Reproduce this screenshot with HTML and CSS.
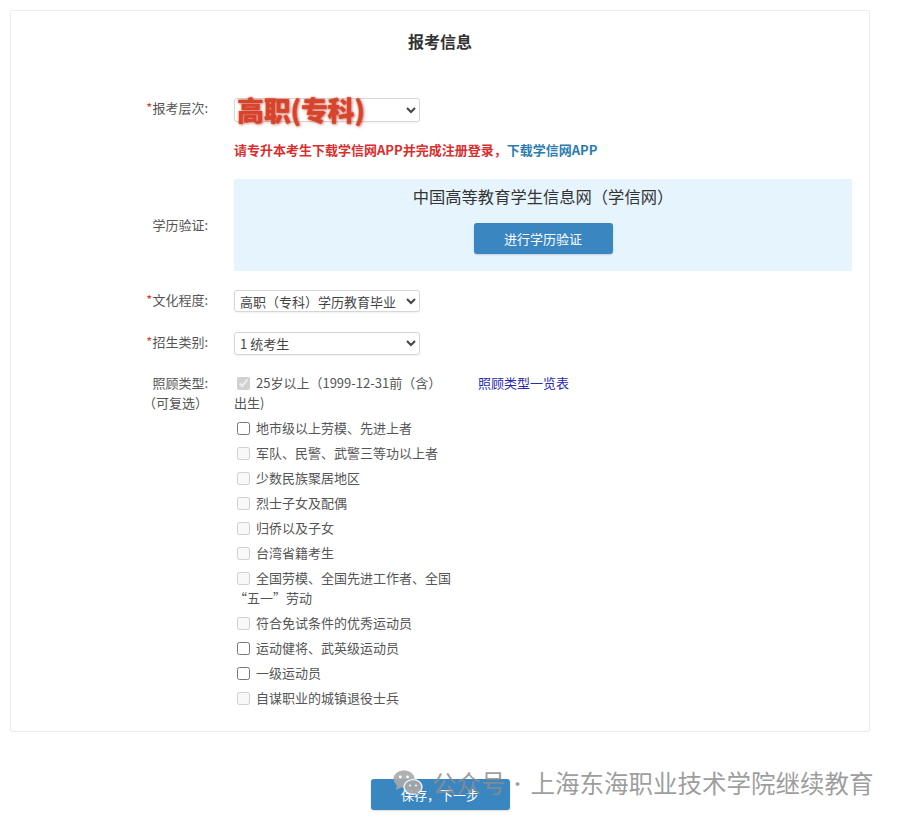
FILE: index.html
```html
<!DOCTYPE html>
<html>
	<head>
		<meta charset="UTF-8">
		<title>报考信息</title>
		<link rel="stylesheet" href="styles.css">
	</head>
	<body>
		<div class="page">
			<div class="card">
				<h2 class="title">报考信息</h2>

				<div class="row row-level">
					<label class="lab"><i>*</i>报考层次:</label>
					<div class="field">
						<div class="sel-wrap">
							<select class="sel"><option></option></select>
							<span class="mark">高职(专科)</span>
						</div>
						<p class="notice">请专升本考生下载学信网APP并完成注册登录，<a href="javascript:;">下载学信网APP</a></p>
					</div>
				</div>

				<div class="row row-verify">
					<label class="lab">学历验证:</label>
					<div class="field">
						<div class="chsi">
							<div class="chsi-title">中国高等教育学生信息网（学信网）</div>
							<a href="javascript:;" class="btn btn-verify">进行学历验证</a>
						</div>
					</div>
				</div>

				<div class="row row-edu">
					<label class="lab"><i>*</i>文化程度:</label>
					<div class="field">
						<select class="sel sel-edu"><option>高职（专科）学历教育毕业</option></select>
					</div>
				</div>

				<div class="row row-type">
					<label class="lab"><i>*</i>招生类别:</label>
					<div class="field">
						<select class="sel sel-type"><option>1 统考生</option></select>
					</div>
				</div>

				<div class="row row-care">
					<label class="lab">照顾类型:<br>（可复选）</label>
					<div class="field care">
						<div class="checks">
							<div class="item"><input type="checkbox" checked disabled>25岁以上（1999-12-31前（含）出生)</div>
							<div class="item"><input type="checkbox">地市级以上劳模、先进上者</div>
							<div class="item"><input type="checkbox" disabled>军队、民警、武警三等功以上者</div>
							<div class="item"><input type="checkbox" disabled>少数民族聚居地区</div>
							<div class="item"><input type="checkbox" disabled>烈士子女及配偶</div>
							<div class="item"><input type="checkbox" disabled>归侨以及子女</div>
							<div class="item"><input type="checkbox" disabled>台湾省籍考生</div>
							<div class="item"><input type="checkbox" disabled>全国劳模、全国先进工作者、全国<wbr>“五一”劳动</div>
							<div class="item"><input type="checkbox" disabled>符合免试条件的优秀运动员</div>
							<div class="item"><input type="checkbox">运动健将、武英级运动员</div>
							<div class="item"><input type="checkbox">一级运动员</div>
							<div class="item"><input type="checkbox" disabled>自谋职业的城镇退役士兵</div>
						</div>
						<a href="javascript:;" class="care-link">照顾类型一览表</a>
					</div>
				</div>
			</div>

			<div class="actions">
				<a href="javascript:;" class="btn btn-save">保存，下一步</a>
			</div>

			<!-- 公众号水印 -->
			<div class="watermark">
				<svg class="wx" width="30" height="28" viewBox="0 0 30 28">
					<ellipse cx="11" cy="10" rx="10.5" ry="8.8" fill="#a9a9a9"/>
					<path d="M4 16 L3 21 L8.5 18 Z" fill="#a9a9a9"/>
					<circle cx="7.3" cy="8" r="1.4" fill="#fff"/>
					<circle cx="14.5" cy="8" r="1.4" fill="#fff"/>
					<ellipse cx="20" cy="18" rx="9" ry="7.4" fill="#a9a9a9" stroke="#fff" stroke-width="1.4"/>
					<path d="M25 23 L27 27 L22 24.5 Z" fill="#a9a9a9"/>
					<circle cx="17" cy="16.5" r="1.1" fill="#fff"/>
					<circle cx="23" cy="16.5" r="1.1" fill="#fff"/>
				</svg>
				<span>公众号</span><span class="dot">·</span><span>上海东海职业技术学院继续教育</span>
			</div>
		</div>
	</body>
</html>
```

FILE: styles.css
```css
*{
	margin:0;
	padding:0;
	box-sizing:border-box;
}
body{
	font-family:"Noto Sans CJK SC","Microsoft YaHei",sans-serif;
	font-size:13px;
	color:#555;
	background:#fff;
}
a{
	text-decoration:none;
}
.page{
	position:relative;
	width:907px;
	height:820px;
	padding:10px 0 0 10px;
}
.card{
	width:860px;
	border:1px solid #ececec;
	border-radius:2px;
	padding:19px 0 18px;
}
.title{
	text-align:center;
	font-size:16px;
	line-height:22px;
	font-weight:bold;
	color:#333;
}

/* 表单行 */
.row{
	display:flex;
	align-items:flex-start;
}
.lab{
	width:197px;
	flex-shrink:0;
	text-align:right;
	line-height:20px;
	color:#555;
}
.lab i{
	font-style:normal;
	color:#e23b2e;
}
.field{
	margin-left:26px;
}
.row-level{margin-top:46px;}
.row-verify{margin-top:20px;align-items:center;}
.row-edu{margin-top:19px;}
.row-type{margin-top:20px;}
.row-care{margin-top:18px;}

.sel{
	width:186px;
	height:24px;
	border:1px solid #d6d6d6;
	border-radius:3px;
	background:#fff;
	box-shadow:0 1px 2px rgba(0,0,0,0.06);
	font-family:inherit;
	font-size:13px;
	color:#444;
	padding-left:1px;
}
.sel-edu{height:22px;}
.sel-type{height:23px;}

.sel-wrap{
	position:relative;
	width:186px;
}
/* 截图上的红字标注 */
.mark{
	position:absolute;
	left:3px;
	top:-5px;
	font-size:27px;
	line-height:34px;
	font-weight:900;
	color:#d8432c;
	letter-spacing:-0.3px;
	text-shadow:0 0 2px rgba(216,67,44,0.7),1px 1px 3px rgba(160,40,20,0.5);
	white-space:nowrap;
}
.notice{
	margin-top:19px;
	line-height:18px;
	font-size:13px;
	font-weight:bold;
	color:#d92f2f;
}
.notice a{
	color:#2d7cb0;
}

/* 学信网 */
.chsi{
	width:618px;
	background:#e6f4fd;
	text-align:center;
	padding:6px 0 17px;
}
.chsi-title{
	font-size:16.3px;
	line-height:22px;
	color:#333;
}
.btn{
	display:inline-block;
	width:139px;
	height:31px;
	line-height:31px;
	text-align:center;
	background:#3a86c1;
	color:#fff;
	border-radius:3px;
	font-size:13px;
	box-shadow:0 1px 2px rgba(0,0,0,0.15);
}
.btn-verify{
	margin-top:16px;
}

/* 照顾类型 */
.care{
	display:flex;
	align-items:flex-start;
}
.checks{
	width:220px;
}
.item{
	line-height:20px;
	margin-bottom:5px;
	color:#555;
}
.item input{
	width:13px;
	height:13px;
	margin:0 6px 0 3px;
	vertical-align:-2px;
}
.care-link{
	margin-left:24px;
	line-height:20px;
	color:#2a2ab0;
}

.actions{
	width:860px;
	text-align:center;
	margin-top:47px;
}

.watermark{
	position:absolute;
	left:393px;
	top:767px;
	display:flex;
	align-items:center;
	color:rgba(140,140,140,0.85);
	font-size:24.5px;
	line-height:32px;
	white-space:nowrap;
}
.wx{
	margin-right:9px;
	opacity:0.9;
}
.dot{
	font-size:18px;
	margin:0 4px 0 3px;
}
```
